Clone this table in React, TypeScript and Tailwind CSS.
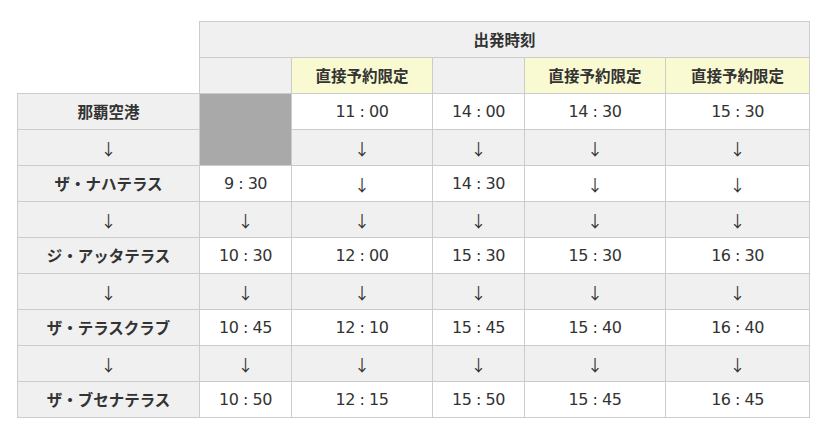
const times: (string | null)[][] = [
  [null, "11 : 00", "14 : 00", "14 : 30", "15 : 30"],
  [null, "↓", "↓", "↓", "↓"],
  ["9 : 30", "↓", "14 : 30", "↓", "↓"],
  ["↓", "↓", "↓", "↓", "↓"],
  ["10 : 30", "12 : 00", "15 : 30", "15 : 30", "16 : 30"],
  ["↓", "↓", "↓", "↓", "↓"],
  ["10 : 45", "12 : 10", "15 : 45", "15 : 40", "16 : 40"],
  ["↓", "↓", "↓", "↓", "↓"],
  ["10 : 50", "12 : 15", "15 : 50", "15 : 45", "16 : 45"],
]

const stops = ["那覇空港", "↓", "ザ・ナハテラス", "↓", "ジ・アッタテラス", "↓", "ザ・テラスクラブ", "↓", "ザ・ブセナテラス"]

const cell = "border border-[#cccccc] h-[36px] p-0 text-center align-middle"
const head = " font-bold text-[15.5px]"
const time = " font-['DejaVu_Sans',sans-serif] text-[16px] tracking-[-0.5px]"

export default function App() {
  return (
    <div className="w-[830px] h-[434px] bg-white pl-[17px] pt-[21px] text-[#333333] text-[16px]" style={{ fontFamily: '"Noto Sans CJK JP", "Noto Sans", sans-serif' }}>
      <table className="table-fixed border-collapse w-[792px]">
        <colgroup>
          <col className="w-[182px]" />
          <col className="w-[92px]" />
          <col className="w-[141px]" />
          <col className="w-[92px]" />
          <col className="w-[141px]" />
          <col className="w-[144px]" />
        </colgroup>
        <thead>
          <tr>
            <th rowSpan={2} className="p-0 bg-white"></th>
            <th colSpan={5} className={cell + " bg-[#f0f0f0]" + head}>出発時刻</th>
          </tr>
          <tr>
            <th className={cell + " bg-[#f0f0f0]"}></th>
            <th className={cell + " bg-[#fafad2]" + head}>直接予約限定</th>
            <th className={cell + " bg-[#f0f0f0]"}></th>
            <th className={cell + " bg-[#fafad2]" + head}>直接予約限定</th>
            <th className={cell + " bg-[#fafad2]" + head}>直接予約限定</th>
          </tr>
        </thead>
        <tbody>
          {times.map((row, i) => {
            const arrow = i % 2 === 1
            return (
              <tr key={i}>
                <th className={cell + " bg-[#f0f0f0]" + (arrow ? " font-normal" : head)}>{stops[i]}</th>
                {row.map((t, j) => {
                  if (t === null) {
                    if (i === 0) return <td key={j} rowSpan={2} className={cell + " bg-[#a9a9a9]"}></td>
                    return null
                  }
                  return (
                    <td key={j} className={cell + (arrow ? " bg-[#f0f0f0]" : " bg-white") + (t === "↓" ? "" : time)}>{t}</td>
                  )
                })}
              </tr>
            )
          })}
        </tbody>
      </table>
    </div>
  )
}
